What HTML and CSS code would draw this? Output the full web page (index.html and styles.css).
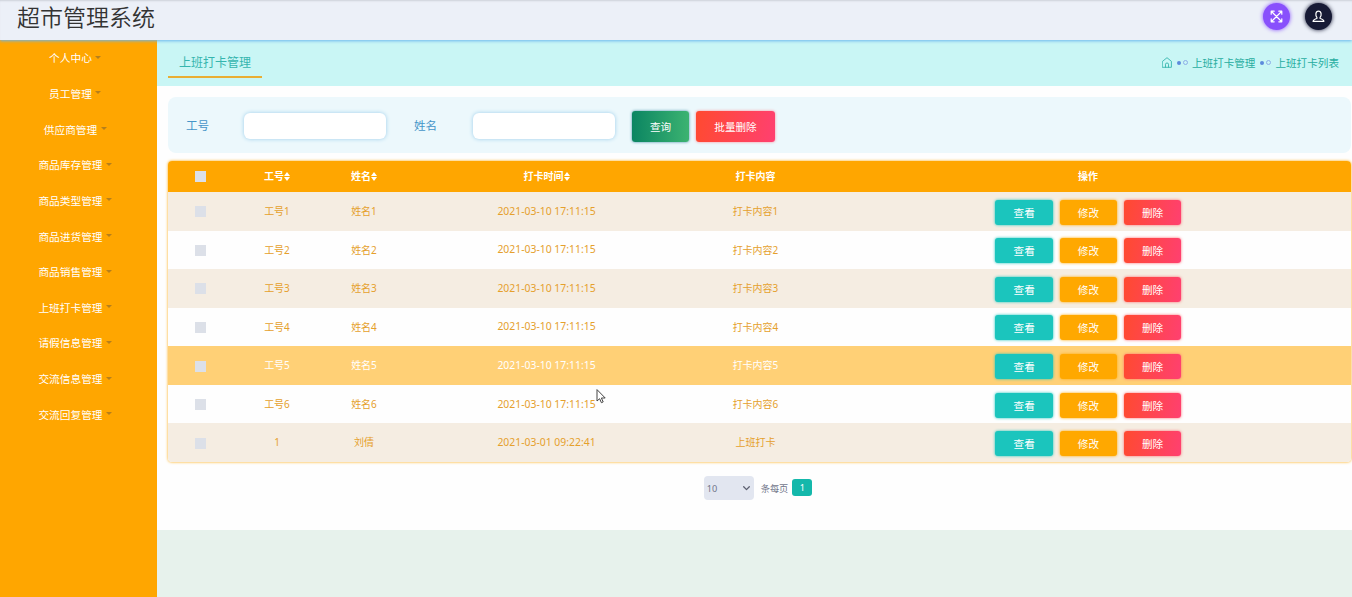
FILE: index.html
```
<!DOCTYPE html>
<html lang="zh-CN">
<head>
	<meta charset="utf-8">
	<title>超市管理系统</title>
	<link rel="stylesheet" href="styles.css">
</head>
<body>
<!-- 顶部 -->
<header class="header">
	<h1 class="logo">超市管理系统</h1>
	<div class="header-btns">
		<a class="round full">
			<svg width="13" height="13" viewBox="0 0 13 13"><path d="M1.5 1.5l10 10M11.5 1.5l-10 10M1.2 4.2v-3h3M8.8 1.2h3v3M11.8 8.8v3h-3M4.2 11.8h-3v-3"/></svg>
		</a>
		<a class="round user">
			<svg width="13" height="13" viewBox="0 0 13 13"><path d="M4.9 7.4C3.3 5.6 3.3 1.2 6.5 1.2s3.2 4.4 1.6 6.2v1c1.6.5 3.6 1 3.8 3H1.1c.2-2 2.2-2.5 3.8-3z"/></svg>
		</a>
	</div>
</header>
<div class="wrapper">
	<!-- 左侧菜单 -->
	<ul class="menu">
		<li>个人中心<i class="caret"></i></li>
		<li>员工管理<i class="caret"></i></li>
		<li>供应商管理<i class="caret"></i></li>
		<li>商品库存管理<i class="caret"></i></li>
		<li>商品类型管理<i class="caret"></i></li>
		<li>商品进货管理<i class="caret"></i></li>
		<li>商品销售管理<i class="caret"></i></li>
		<li>上班打卡管理<i class="caret"></i></li>
		<li>请假信息管理<i class="caret"></i></li>
		<li>交流信息管理<i class="caret"></i></li>
		<li>交流回复管理<i class="caret"></i></li>
	</ul>
	<div class="main">
		<div class="bar">
			<h2 class="bar-title">上班打卡管理</h2>
			<div class="crumb">
				<svg class="home" width="10" height="11" viewBox="0 0 10 11"><path d="M.6 4.3L5 .7l4.4 3.6v6H.6zM3.5 10.3V7.2q0-1.2 1.5-1.2t1.5 1.2v3.1"/></svg>
				<i class="dots"></i><span>上班打卡管理</span>
				<i class="dots"></i><span>上班打卡列表</span>
			</div>
		</div>
		<div class="content">
			<!-- 查询 -->
			<div class="search">
				<label for="gonghao">工号</label>
				<input type="text" id="gonghao">
				<label for="xingming">姓名</label>
				<input type="text" id="xingming">
				<button class="btn-search">查询</button>
				<button class="btn-batch">批量删除</button>
			</div>
			<!-- 列表 -->
			<table class="table">
				<colgroup>
					<col class="c1"><col class="c2"><col class="c3"><col class="c4"><col class="c5"><col class="c6">
				</colgroup>
				<thead>
					<tr>
						<th><i class="check"></i></th>
						<th>工号<i class="sort"></i></th>
						<th>姓名<i class="sort"></i></th>
						<th>打卡时间<i class="sort"></i></th>
						<th>打卡内容</th>
						<th>操作</th>
					</tr>
				</thead>
				<tbody>
					<tr>
						<td><i class="check"></i></td><td>工号1</td><td>姓名1</td><td class="time">2021-03-10 17:11:15</td><td>打卡内容1</td>
						<td><div class="ops"><button class="view">查看</button><button class="edit">修改</button><button class="del">删除</button></div></td>
					</tr>
					<tr>
						<td><i class="check"></i></td><td>工号2</td><td>姓名2</td><td class="time">2021-03-10 17:11:15</td><td>打卡内容2</td>
						<td><div class="ops"><button class="view">查看</button><button class="edit">修改</button><button class="del">删除</button></div></td>
					</tr>
					<tr>
						<td><i class="check"></i></td><td>工号3</td><td>姓名3</td><td class="time">2021-03-10 17:11:15</td><td>打卡内容3</td>
						<td><div class="ops"><button class="view">查看</button><button class="edit">修改</button><button class="del">删除</button></div></td>
					</tr>
					<tr>
						<td><i class="check"></i></td><td>工号4</td><td>姓名4</td><td class="time">2021-03-10 17:11:15</td><td>打卡内容4</td>
						<td><div class="ops"><button class="view">查看</button><button class="edit">修改</button><button class="del">删除</button></div></td>
					</tr>
					<tr class="on">
						<td><i class="check"></i></td><td>工号5</td><td>姓名5</td><td class="time">2021-03-10 17:11:15</td><td>打卡内容5</td>
						<td><div class="ops"><button class="view">查看</button><button class="edit">修改</button><button class="del">删除</button></div></td>
					</tr>
					<tr>
						<td><i class="check"></i></td><td>工号6</td><td>姓名6</td><td class="time">2021-03-10 17:11:15</td><td>打卡内容6</td>
						<td><div class="ops"><button class="view">查看</button><button class="edit">修改</button><button class="del">删除</button></div></td>
					</tr>
					<tr>
						<td><i class="check"></i></td><td>1</td><td>刘倩</td><td class="time">2021-03-01 09:22:41</td><td>上班打卡</td>
						<td><div class="ops"><button class="view">查看</button><button class="edit">修改</button><button class="del">删除</button></div></td>
					</tr>
				</tbody>
			</table>
			<!-- 分页 -->
			<div class="pager">
				<div class="size">10<svg width="7" height="5" viewBox="0 0 7 5"><path d="M.7.8l2.8 2.8L6.3.8"/></svg></div>
				<span>条每页</span>
				<a class="page">1</a>
			</div>
		</div>
	</div>
</div>
<svg class="cursor" width="10" height="15" viewBox="0 0 10 15"><path d="M1 1v11l2.6-2.3 1.8 4 1.8-.8-1.8-3.9h3.4z"/></svg>
</body>
</html>
```
FILE: styles.css
```
*{margin: 0;padding: 0;box-sizing: border-box;}
body{
	width: 1352px;
	height: 597px;
	overflow: hidden;
	background: #e7f2ec;
	font-family: "Noto Sans","Noto Sans CJK SC",sans-serif;
	font-size: 10px;
}
ul{list-style: none;}
i{font-style: normal;}
svg{display: block;fill: none;stroke-linecap: round;stroke-linejoin: round;}
button{border: 0;color: #fff;font-family: inherit;font-size: 10.6px;}

/* 顶部 */
.header{
	position: relative;
	display: flex;
	justify-content: space-between;
	height: 40px;
	padding: 0 20px 0 17px;
	background: #ecf0f8;
	box-shadow: inset 0 2px 2px -1px #cdd1da, 0 1px 3px #69b5ee;
}
.logo{color: #333;font-size: 23px;font-weight: 350;line-height: 35px;}
.header-btns{display: flex;gap: 15px;padding-top: 3px;}
.round{
	display: flex;
	align-items: center;
	justify-content: center;
	width: 27px;
	height: 27px;
	border-radius: 50%;
}
.round svg{stroke: #fff;stroke-width: 1.2;}
.full{background: #8950fc;box-shadow: 0 0 4px #8950fc;}
.user{background: #171a35;box-shadow: 0 0 4px #171a35;}

.wrapper{display: flex;height: 557px;}

/* 左侧菜单 */
.menu{width: 157px;background: #ffa600;}
.menu li{
	display: flex;
	align-items: center;
	justify-content: center;
	height: 35.65px;
	padding-right: 6.5px;
	color: #fff;
	font-size: 10.7px;
}
.caret{
	margin: -1px 0 0 3.5px;
	border: 3px solid transparent;
	border-top: 3px solid #b57f1c;
	border-bottom: 0;
}

/* 右侧 */
.main{flex: 1;}
.bar{
	display: flex;
	justify-content: space-between;
	height: 46px;
	padding: 0 13px 0 11px;
	background: #c9f6f5;
}
.bar-title{
	height: 38px;
	padding: 7px 11px 0;
	border-bottom: 2px solid #e9ae33;
	color: #35b5ae;
	font-size: 12px;
	font-weight: 400;
	line-height: 32px;
}
.crumb{display: flex;align-items: center;padding-bottom: 1px;color: #27ada0;font-size: 10.6px;}
.home{stroke: #35b5ae;stroke-width: .9;}
.dots{display: flex;align-items: center;gap: 2px;margin: 0 4px 0 5px;}
.dots:before{content: "";width: 4px;height: 4px;border-radius: 50%;background: #5d8bdc;}
.dots:after{content: "";width: 5px;height: 5px;border: 1px solid #8eaee8;border-radius: 50%;}
.dots:before,.dots:after{box-sizing: border-box;}

.content{height: 444px;padding: 11px 0 0 11px;background: #fefefe;}
.search{
	display: flex;
	align-items: center;
	width: 1183px;
	height: 56px;
	padding: 2px 0 0 18px;
	border-radius: 8px;
	background: #ecf8fc;
}
.search label{width: 58px;margin-top: -3px;color: #4595c8;font-size: 11.6px;}
.search input{
	width: 142px;
	height: 26px;
	margin-right: 28px;
	border: 0;
	border-radius: 6px;
	background: #fff;
	box-shadow: 0 0 4px #9bcdeb;
}
.search input + label{width: 59px;}
.search button{height: 31px;border-radius: 3px;}
.search .btn-search{
	width: 57px;
	margin-left: -11px;
	background: linear-gradient(90deg,#0b8562,#3cb371);
	box-shadow: 0 0 3px #3f8ba5;
}
.search .btn-batch{
	width: 79px;
	margin-left: 7px;
	background: linear-gradient(100deg,#ff4a30,#ff4070);
	box-shadow: 0 0 3px #ff8a94;
}

/* 表格 */
.table{
	width: 1183px;
	margin-top: 8px;
	table-layout: fixed;
	border-spacing: 0;
	border-radius: 4px;
	box-shadow: 0 0 3px #ffa600;
	overflow: hidden;
}
.c1{width: 65px;}
.c2{width: 88px;}
.c3{width: 86px;}
.c4{width: 279px;}
.c5{width: 139px;}
.c6{width: 526px;}
.table th{height: 31px;padding-bottom: 2px;background: #ffa600;color: #fff;font-weight: 700;font-size: 10px;}
.table td{height: 38.57px;padding-bottom: 1.5px;color: #e5a02c;text-align: center;background: #fefefe;}
.table td:last-child{padding-bottom: 0;}
.table tbody tr:nth-child(odd) td{background: #f5ede2;}
.table tbody tr.on td{background: #ffd076;color: #fff;}
.table .time{padding-bottom: 1px;font-size: 10.4px;}
.check{display: inline-block;width: 11px;height: 11px;background: #dce0e8;vertical-align: middle;}
.sort{
	display: inline-block;
	width: 6px;
	height: 8px;
	vertical-align: 0;
}
.sort:before,.sort:after{
	content: "";
	display: block;
	width: 0;
	border: 3px solid transparent;
}
.sort:before{border-top: 0;border-bottom: 4px solid #fff;}
.sort:after{margin-top: 1px;border-bottom: 0;border-top: 4px solid #fff;}
.ops{display: flex;justify-content: center;gap: 6.5px;padding: 2px 0 0 .8px;}
.ops button{width: 57.7px;height: 25px;border-radius: 3px;}
.view{background: #1bc5bd;box-shadow: 0 0 3px #1bc5bd;}
.edit{background: #ffa800;box-shadow: 0 0 3px #ffa800;}
.del{background: linear-gradient(100deg,#ff4a30,#ff4070);box-shadow: 0 0 3px #ff6a70;}

/* 分页 */
.pager{
	display: flex;
	align-items: center;
	justify-content: center;
	margin-top: 14px;
	padding-right: 3px;
	width: 1183px;
	color: #72768a;
	font-size: 9.2px;
}
.size{
	display: flex;
	align-items: center;
	justify-content: space-between;
	width: 50px;
	height: 24px;
	margin-right: 7px;
	padding: 2px 4px 0 3px;
	border-radius: 4px;
	background: #e2e6f0;
}
.size svg{stroke: #5c6070;stroke-width: 1.3;}
.page{
	width: 20px;
	height: 17px;
	margin-left: 4px;
	border-radius: 3px;
	background: #14b8ab;
	color: #fff;
	line-height: 17px;
	text-align: center;
}

/* 鼠标 */
.cursor{position: absolute;left: 596px;top: 389px;fill: #fff;stroke: #444;stroke-width: 1;}
```
